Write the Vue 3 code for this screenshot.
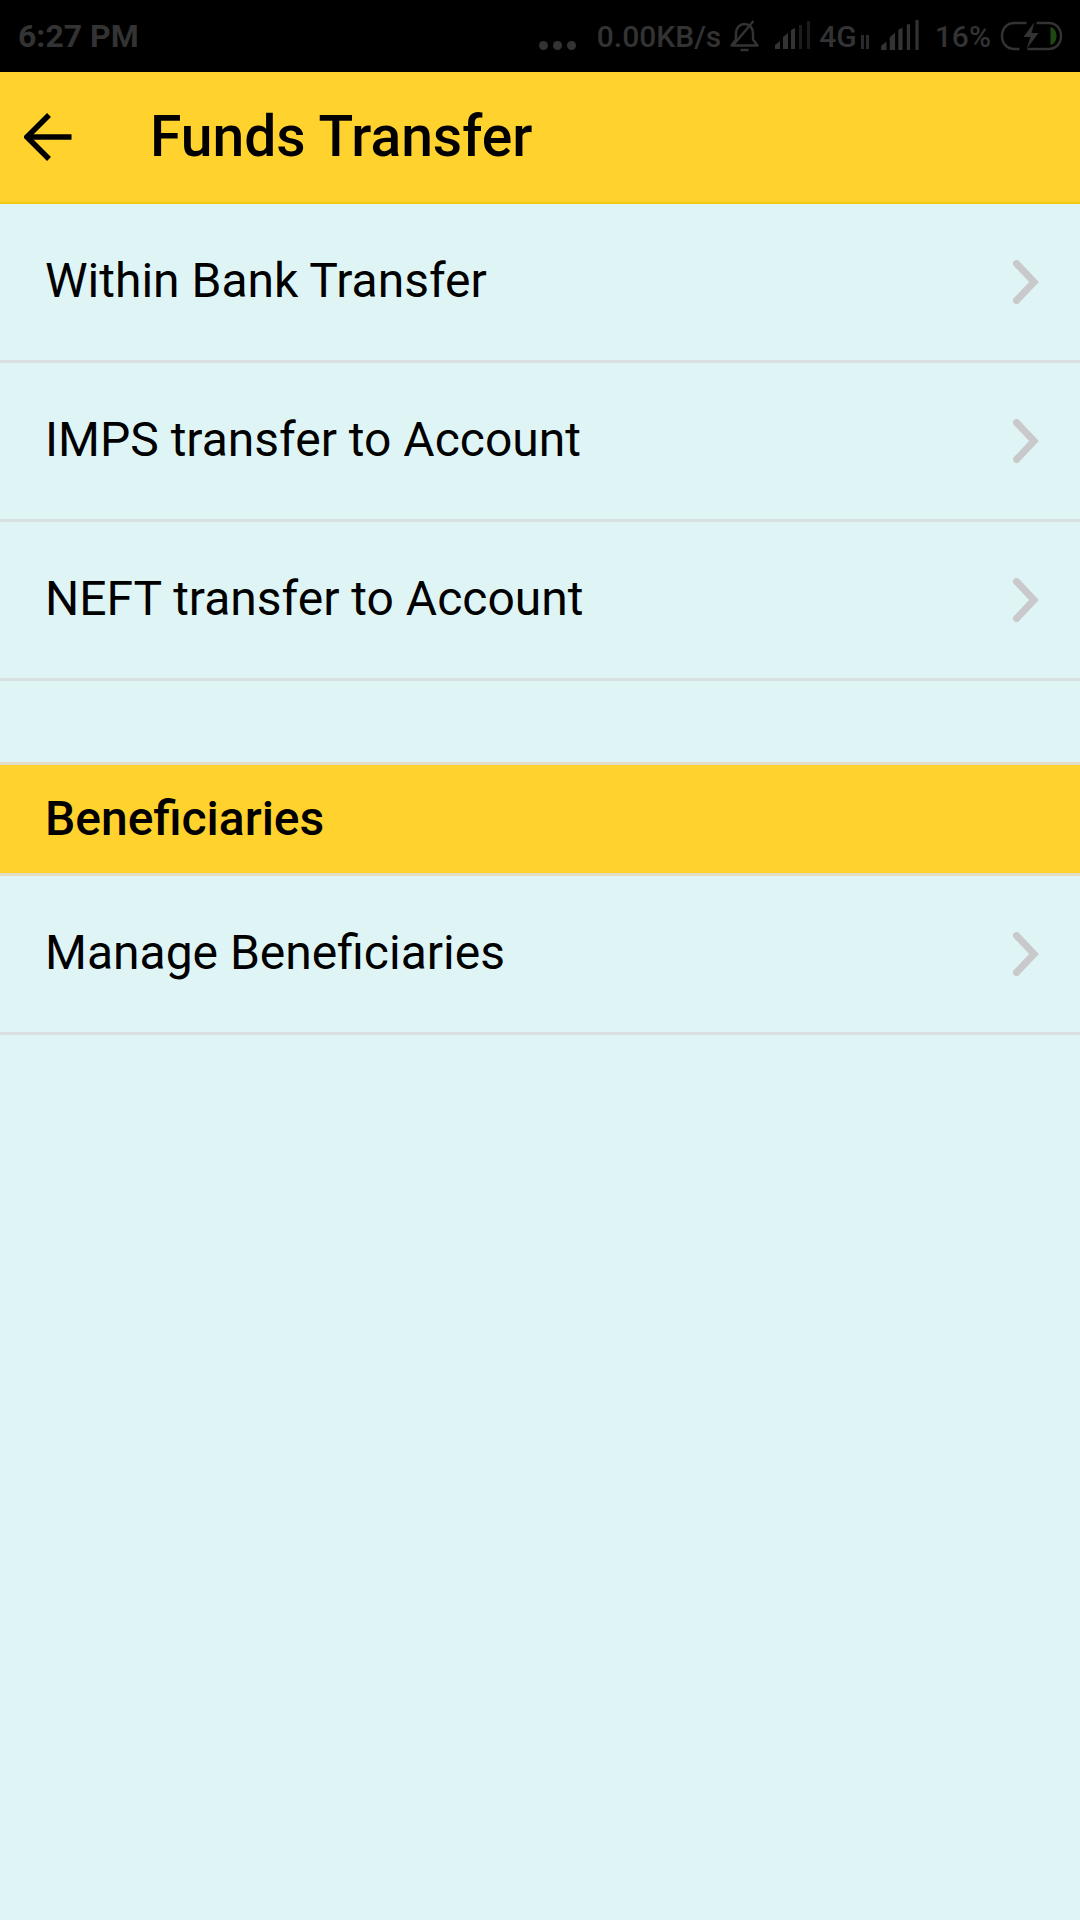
<template>
  <div class="screen">
    <div class="status-bar">
      <span class="time">6:27 PM</span>
      <div class="status-right">
        <span class="dots"><i></i><i></i><i></i></span>
        <span class="speed">0.00KB/s</span>
        <svg class="bell" width="31" height="32" viewBox="0 0 30 32" fill="none" stroke="#333" stroke-width="2.4">
          <path d="M2 25.500h26l-4.500-6V13c0-5-3.500-9-8.500-9s-8.500 4-8.500 9v6.500z" stroke-linejoin="round" />
          <path d="M3 26 24 1" />
          <path d="M11 30h8" />
        </svg>
        <svg class="signal sim1" width="38" height="28" viewBox="0 0 38 28">
          <path d="M0 28v-4l5-4v8zM8 28V16l5-4v16zM16 28V9l4-2v21z" fill="#333" />
          <path d="M24 28V4h3v24zM32 28V0h3v28z" fill="#1c1c1c" />
        </svg>
        <span class="net">4G</span>
        <svg class="arrows" width="8" height="14" viewBox="0 0 8 14" fill="#2a2a2a">
          <path d="M0 0h3v14H0zM5 0h3v14H5z" />
        </svg>
        <svg class="signal" width="41" height="30" viewBox="0 0 38 28" fill="#333">
          <path d="M0 28v-4l5-4v8zM8 28V16l5-4v16zM16 28V9l4-2v21zM24 28V4h3v24zM32 28V0h3v28z" />
        </svg>
        <span class="pct">16%</span>
        <svg class="battery" width="65" height="30" viewBox="0 0 62 30" fill="none">
          <path d="M19 28H14C6 28 1.500 22 1.500 15S6 2 14 2h12M36 2h12c8 0 12.500 6 12.500 13S56 28 48 28H27" stroke="#333" stroke-width="2.400" />
          <path d="M50 6c4 1 6 5 6 9s-2 8-6 9z" fill="#1e4a12" />
          <path d="M34 1 23 16h7l-4 12 12-16h-7z" fill="#333" />
        </svg>
      </div>
    </div>

    <header class="toolbar">
      <svg class="back" width="48" height="48" viewBox="0 0 48 48" fill="none" stroke="#000" stroke-width="5.500">
        <path d="M47.500 24H3" />
        <path d="M25 2 3 24 25 46" />
      </svg>
      <h1>Funds Transfer</h1>
    </header>

    <div v-for="item in transfers" :key="item" class="row">
      <span>{{ item }}</span>
      <svg width="26" height="44" viewBox="0 0 26 44" fill="none" stroke="#c9c9cb" stroke-width="7" stroke-linecap="round">
        <path d="M3.500 3.500 21 22 3.500 40.500" />
      </svg>
    </div>

    <div class="section">Beneficiaries</div>

    <div class="row">
      <span>Manage Beneficiaries</span>
      <svg width="26" height="44" viewBox="0 0 26 44" fill="none" stroke="#c9c9cb" stroke-width="7" stroke-linecap="round">
        <path d="M3.500 3.500 21 22 3.500 40.500" />
      </svg>
    </div>
  </div>
</template>

<script setup>
const transfers = [
  'Within Bank Transfer',
  'IMPS transfer to Account',
  'NEFT transfer to Account',
]
</script>

<style>
html,
body {
  margin: 0;
  background: #dff5f5;
}
</style>

<style scoped>
.screen {
  width: 1080px;
  height: 1920px;
  background: #dff5f5;
  font-family: Roboto, sans-serif;
  color: #000;
  overflow: hidden;
}

.status-bar {
  height: 72px;
  background: #000;
  color: #333;
  display: flex;
  align-items: center;
  justify-content: space-between;
  padding: 0 16px 0 18px;
  box-sizing: border-box;
  font-size: 30px;
  font-weight: 700;
}

.time {
  font-size: 32px;
}

.status-right {
  display: flex;
  align-items: center;
}

.status-right span {
  font-weight: 500;
}

.dots {
  display: flex;
  gap: 5px;
  margin-top: 18px;
  margin-right: 21px;
}

.dots i {
  width: 9px;
  height: 9px;
  border-radius: 50%;
  background: #333;
}

.bell {
  margin: 0 15px 0 8px;
}

.signal {
  margin-top: -2px;
}

.net {
  margin-left: 6px;
}

.arrows {
  margin: 12px 12px 0 4px;
}

.pct {
  margin: 0 8px 0 13px;
}

.toolbar {
  height: 132px;
  background: #ffd22e;
  border-bottom: 2px solid #f2c715;
  box-sizing: border-box;
  display: flex;
  align-items: center;
  padding-left: 24px;
}

.toolbar h1 {
  margin: 0 0 2px 78px;
  font-size: 57px;
  font-weight: 500;
}

.row {
  height: 159px;
  box-sizing: border-box;
  border-bottom: 3px solid #dadfe2;
  display: flex;
  align-items: center;
  justify-content: space-between;
  padding: 0 41px 0 45px;
  font-size: 48px;
}

.row span {
  margin-bottom: 4px;
}

.section {
  height: 114px;
  margin-top: 81px;
  box-sizing: border-box;
  background: #ffd22e;
  border-top: 3px solid #e3dcc4;
  border-bottom: 3px solid #e3dcc4;
  display: flex;
  align-items: center;
  padding: 0 0 2px 45px;
  font-size: 48px;
  font-weight: 500;
}
</style>
